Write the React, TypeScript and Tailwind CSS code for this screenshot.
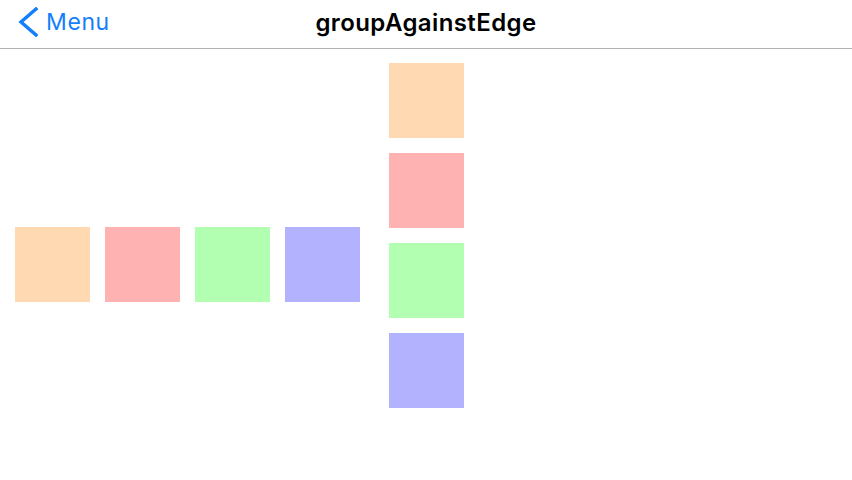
export default function App() {
  const colors = ['bg-[#ffd9b2]', 'bg-[#ffb2b2]', 'bg-[#b2ffb2]', 'bg-[#b2b2ff]']

  return (
    <div className="w-[852px] h-[480px] bg-white flex flex-col overflow-hidden" style={{ fontFamily: 'Inter, "Liberation Sans", sans-serif' }}>
      <header className="h-[49px] border-b border-[#b2b2b2] flex items-center relative shrink-0">
        <div className="flex items-center pl-[17px] text-[#147efb]">
          <svg width="22" height="30" viewBox="0 0 22 30" className="mt-[-4px]">
            <polyline points="19,2 4,15 19,28" fill="none" stroke="#147efb" strokeWidth="3.4" strokeLinecap="square" />
          </svg>
          <span className="ml-[7px] text-[23px] leading-none mt-[-3px] tracking-[0.6px]">Menu</span>
        </div>
        <h1 className="absolute left-0 right-0 text-center text-[24px] font-semibold text-black leading-none mt-[-3px] tracking-[0.4px]">
          groupAgainstEdge
        </h1>
      </header>

      <main className="flex-1 flex">
        <div className="flex gap-[15px] pl-[15px] self-center">
          {colors.map(c => (
            <div key={c} className={`w-[75px] h-[75px] ${c}`} />
          ))}
        </div>
        <div className="flex flex-col gap-[15px] ml-[29px] mt-[14px]">
          {colors.map(c => (
            <div key={c} className={`w-[75px] h-[75px] ${c}`} />
          ))}
        </div>
      </main>
    </div>
  )
}
